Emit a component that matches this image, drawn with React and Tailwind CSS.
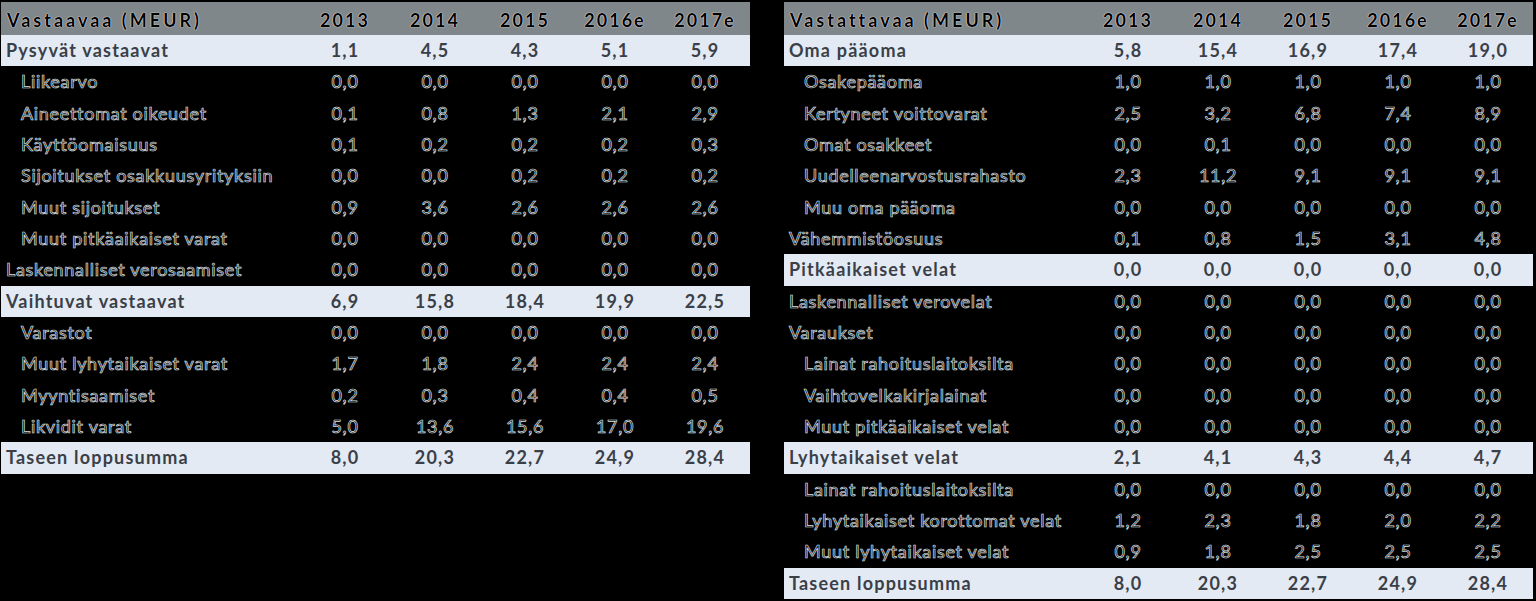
import clsx from 'clsx'

const left = {
  title: 'Vastaavaa (MEUR)',
  rows: [
    ['b', 'Pysyvät vastaavat', '1,1 4,5 4,3 5,1 5,9'],
    ['i', 'Liikearvo', '0,0 0,0 0,0 0,0 0,0'],
    ['i', 'Aineettomat oikeudet', '0,1 0,8 1,3 2,1 2,9'],
    ['i', 'Käyttöomaisuus', '0,1 0,2 0,2 0,2 0,3'],
    ['i', 'Sijoitukset osakkuusyrityksiin', '0,0 0,0 0,2 0,2 0,2'],
    ['i', 'Muut sijoitukset', '0,9 3,6 2,6 2,6 2,6'],
    ['i', 'Muut pitkäaikaiset varat', '0,0 0,0 0,0 0,0 0,0'],
    ['n', 'Laskennalliset verosaamiset', '0,0 0,0 0,0 0,0 0,0'],
    ['b', 'Vaihtuvat vastaavat', '6,9 15,8 18,4 19,9 22,5'],
    ['i', 'Varastot', '0,0 0,0 0,0 0,0 0,0'],
    ['i', 'Muut lyhytaikaiset varat', '1,7 1,8 2,4 2,4 2,4'],
    ['i', 'Myyntisaamiset', '0,2 0,3 0,4 0,4 0,5'],
    ['i', 'Likvidit varat', '5,0 13,6 15,6 17,0 19,6'],
    ['b', 'Taseen loppusumma', '8,0 20,3 22,7 24,9 28,4'],
  ],
}

const right = {
  title: 'Vastattavaa (MEUR)',
  rows: [
    ['b', 'Oma pääoma', '5,8 15,4 16,9 17,4 19,0'],
    ['i', 'Osakepääoma', '1,0 1,0 1,0 1,0 1,0'],
    ['i', 'Kertyneet voittovarat', '2,5 3,2 6,8 7,4 8,9'],
    ['i', 'Omat osakkeet', '0,0 0,1 0,0 0,0 0,0'],
    ['i', 'Uudelleenarvostusrahasto', '2,3 11,2 9,1 9,1 9,1'],
    ['i', 'Muu oma pääoma', '0,0 0,0 0,0 0,0 0,0'],
    ['n', 'Vähemmistöosuus', '0,1 0,8 1,5 3,1 4,8'],
    ['b', 'Pitkäaikaiset velat', '0,0 0,0 0,0 0,0 0,0'],
    ['n', 'Laskennalliset verovelat', '0,0 0,0 0,0 0,0 0,0'],
    ['n', 'Varaukset', '0,0 0,0 0,0 0,0 0,0'],
    ['i', 'Lainat rahoituslaitoksilta', '0,0 0,0 0,0 0,0 0,0'],
    ['i', 'Vaihtovelkakirjalainat', '0,0 0,0 0,0 0,0 0,0'],
    ['i', 'Muut pitkäaikaiset velat', '0,0 0,0 0,0 0,0 0,0'],
    ['b', 'Lyhytaikaiset velat', '2,1 4,1 4,3 4,4 4,7'],
    ['i', 'Lainat rahoituslaitoksilta', '0,0 0,0 0,0 0,0 0,0'],
    ['i', 'Lyhytaikaiset korottomat velat', '1,2 2,3 1,8 2,0 2,2'],
    ['i', 'Muut lyhytaikaiset velat', '0,9 1,8 2,5 2,5 2,5'],
    ['b', 'Taseen loppusumma', '8,0 20,3 22,7 24,9 28,4'],
  ],
}

const years = ['2013', '2014', '2015', '2016e', '2017e']

function Table({ data }) {
  return (
    <div className="w-[749px] font-['Lato',sans-serif]">
      <div className="grid grid-cols-[299px_repeat(5,1fr)] h-[33px] items-center pt-[3px] bg-[#80878b] text-black font-bold text-[18px] [text-shadow:0_0_1px_#fff,0_0_1px_#fff]">
        <div className="pl-[6px] tracking-[3px]">{data.title}</div>
        {years.map(y => <div key={y} className="text-center tracking-[2px]">{y}</div>)}
      </div>
      {data.rows.map(([kind, label, vals], i) => {
        const bold = kind === 'b'
        return (
          <div key={i}
            className={clsx('grid grid-cols-[299px_repeat(5,1fr)] h-[31.33px] items-center text-[18px]',
              bold ? 'bg-[#e4eaf4] text-[#3a3f48] font-bold tracking-[1.2px]'
                   : 'text-black [-webkit-text-stroke:0.7px_#dfe2e8] tracking-[0.7px]')}>
            <div className={kind === 'i' ? 'pl-[20px]' : 'pl-[5px]'}>{label}</div>
            {vals.split(' ').map((v, j) => <div key={j} className="text-center">{v}</div>)}
          </div>
        )
      })}
    </div>
  )
}

export default function App() {
  return (
    <div className="h-[601px] bg-black flex items-start gap-[34px] pl-[1px] pt-[2px]">
      <Table data={left} />
      <Table data={right} />
    </div>
  )
}
